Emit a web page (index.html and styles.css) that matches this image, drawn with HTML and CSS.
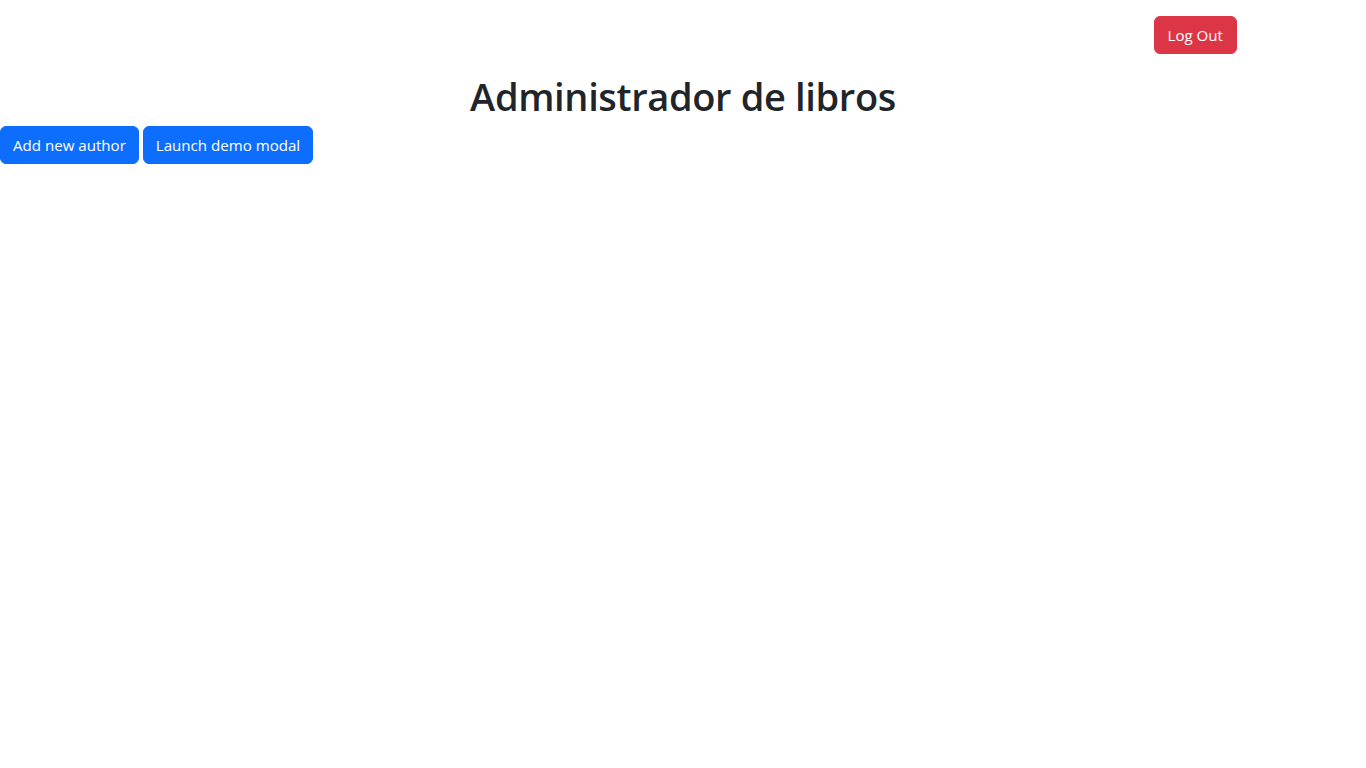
FILE: index.html
```html
<!DOCTYPE html>
<html lang="es">
<head>
<meta charset="utf-8">
<title>Administrador de libros</title>
<link rel="stylesheet" href="styles.css">
</head>
<body>
<header class="topbar">
  <button class="btn btn-danger" type="button">Log Out</button>
</header>
<h1 class="title">Administrador de libros</h1>
<div class="actions">
  <button class="btn btn-primary" type="button">Add new author</button>
  <button class="btn btn-primary" type="button">Launch demo modal</button>
</div>
</body>
</html>
```
FILE: styles.css
```css
* { box-sizing: border-box; }
html, body { margin: 0; padding: 0; }
body {
  font-family: "Open Sans", "Noto Sans", "Liberation Sans", sans-serif;
  font-size: 16px;
  line-height: 1.5;
  color: #212529;
  background: #fff;
}
.topbar {
  display: flex;
  justify-content: flex-end;
  padding: 16px 129px 0 0;
}
.title {
  margin: 16px 0 8px;
  font-size: 38px;
  font-weight: 600;
  line-height: 48px;
  text-align: center;
  letter-spacing: -0.35px;
  padding-top: 2px;
  height: 48px;
}
.actions {
  display: flex;
  gap: 4px;
}
.btn {
  font-family: inherit;
  font-size: 15.1px;
  line-height: 24px;
  height: 38px;
  padding: 6px 12px;
  border: 1px solid transparent;
  border-radius: 6px;
  color: #fff;
  cursor: pointer;
}
.btn-danger { background: #dc3545; border-color: #dc3545; padding: 6px 13px; }
.btn-primary { background: #0d6efd; border-color: #0d6efd; }
```
